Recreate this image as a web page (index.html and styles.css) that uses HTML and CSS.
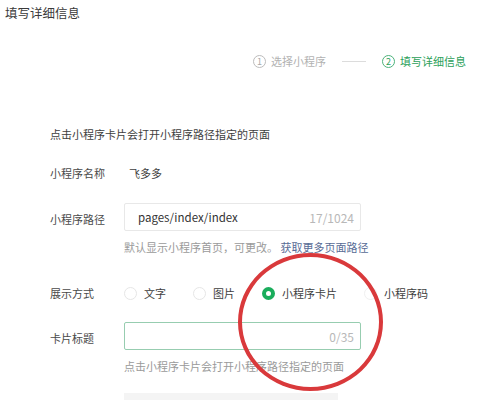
FILE: index.html
```html
<!DOCTYPE html>
<html lang="zh-CN">
<head>
<meta charset="utf-8">
<link rel="stylesheet" href="styles.css">
</head>
<body>
<div class="page">
  <div class="title">填写详细信息</div>
  <div class="steps">
    <div class="step"><span class="num">1</span><span>选择小程序</span></div>
    <div class="step-line"></div>
    <div class="step active"><span class="num">2</span><span>填写详细信息</span></div>
  </div>
  <div class="intro">点击小程序卡片会打开小程序路径指定的页面</div>
  <div class="row row-name">
    <div class="label">小程序名称</div>
    <div class="value">飞多多</div>
  </div>
  <div class="row row-input">
    <div class="label">小程序路径</div>
    <div class="input"><span class="input-text">pages/index/index</span><span class="count">17/1024</span></div>
  </div>
  <div class="hint">默认显示小程序首页，可更改。 <span class="link">获取更多页面路径</span></div>
  <div class="row row-radio">
    <div class="label">展示方式</div>
    <div class="radios">
      <div class="radio"><span class="dot"></span><span>文字</span></div>
      <div class="radio"><span class="dot"></span><span>图片</span></div>
      <div class="radio checked"><span class="dot"></span><span>小程序卡片</span></div>
      <div class="radio faint"><span class="dot"></span><span>小程序码</span></div>
    </div>
  </div>
  <div class="row row-input">
    <div class="label">卡片标题</div>
    <div class="input focus"><span class="input-text"></span><span class="count">0/35</span></div>
  </div>
  <div class="hint">点击小程序卡片会打开小程序路径指定的页面</div>
  <div class="grey-box"></div>
  <div class="annotation"></div>
</div>
</body>
</html>
```
FILE: styles.css
```css
html, body {
  margin: 0;
  padding: 0;
  background: #ffffff;
}
body {
  font-family: "Noto Sans CJK SC", "Noto Sans", sans-serif;
  color: #3e3e3e;
  font-size: 11px;
  width: 504px;
  height: 400px;
  overflow: hidden;
}
.page {
  position: relative;
  height: 400px;
}
.title {
  height: 26px;
  line-height: 26px;
  padding-left: 5px;
  font-size: 12.5px;
  color: #3a3a3a;
}
.steps {
  display: flex;
  justify-content: flex-end;
  align-items: center;
  height: 24px;
  margin-top: 23px;
  padding-right: 38px;
  color: #b2b2b2;
}
.step {
  display: flex;
  align-items: center;
  gap: 5px;
}
.num {
  width: 11px;
  height: 11px;
  border: 1px solid #bcbcbc;
  border-radius: 50%;
  font-size: 9px;
  line-height: 11px;
  text-align: center;
  color: #aaa;
}
.step.active {
  color: #2c9f5a;
}
.step.active .num {
  border-color: #4cb27a;
  color: #2c9f5a;
}
.step-line {
  width: 24px;
  height: 1px;
  background: #dcdcdc;
  margin: 0 16px;
}
.intro {
  margin-top: 51px;
  padding-left: 50px;
  height: 20px;
  line-height: 20px;
  color: #3e3e3e;
}
.row {
  display: flex;
  align-items: center;
  padding-left: 50px;
}
.label {
  width: 74px;
  flex: none;
  color: #4a4a4a;
}
.row-name {
  margin-top: 19px;
  height: 20px;
}
.value {
  padding-left: 5px;
  color: #3e3e3e;
}
.row-input {
  margin-top: 20px;
}
.row-input .label {
  padding-top: 4px;
}
.input {
  width: 237px;
  height: 28px;
  box-sizing: border-box;
  border: 1px solid #e8e8e8;
  border-radius: 2px;
  display: flex;
  align-items: center;
  justify-content: space-between;
  padding: 0 6px 0 13px;
}
.input.focus {
  border-color: #97cdb0;
}
.input-text {
  font-size: 11.5px;
  color: #333;
}
.count {
  font-size: 12px;
  color: #b8b8b8;
}
.hint {
  margin-top: 7px;
  padding-left: 124px;
  height: 18px;
  line-height: 18px;
  color: #9a9a9a;
}
.link {
  color: #576b95;
}
.row-radio {
  margin-top: 27px;
  height: 20px;
}
.radios {
  display: flex;
  align-items: center;
  gap: 27px;
}
.radio {
  display: flex;
  align-items: center;
  gap: 7px;
  color: #3e3e3e;
}
.dot {
  width: 13px;
  height: 13px;
  box-sizing: border-box;
  border: 1px solid #e6e6e6;
  border-radius: 50%;
  display: inline-block;
}
.radio.checked .dot {
  border: 4px solid #1aad5c;
  box-shadow: inset 0 0 0 2px #ffffff;
  background: #ffffff;
}
.radio.faint .dot {
  border-color: #f0f0f0;
}
.row-radio + .row-input {
  margin-top: 19px;
}
.grey-box {
  margin-top: 18px;
  margin-left: 124px;
  width: 214px;
  height: 20px;
  background: #f4f4f4;
}
.annotation {
  position: absolute;
  left: 238px;
  top: 253px;
  width: 145px;
  height: 138px;
  box-sizing: border-box;
  border: 4px solid #d9393b;
  border-radius: 50%;
}
```
